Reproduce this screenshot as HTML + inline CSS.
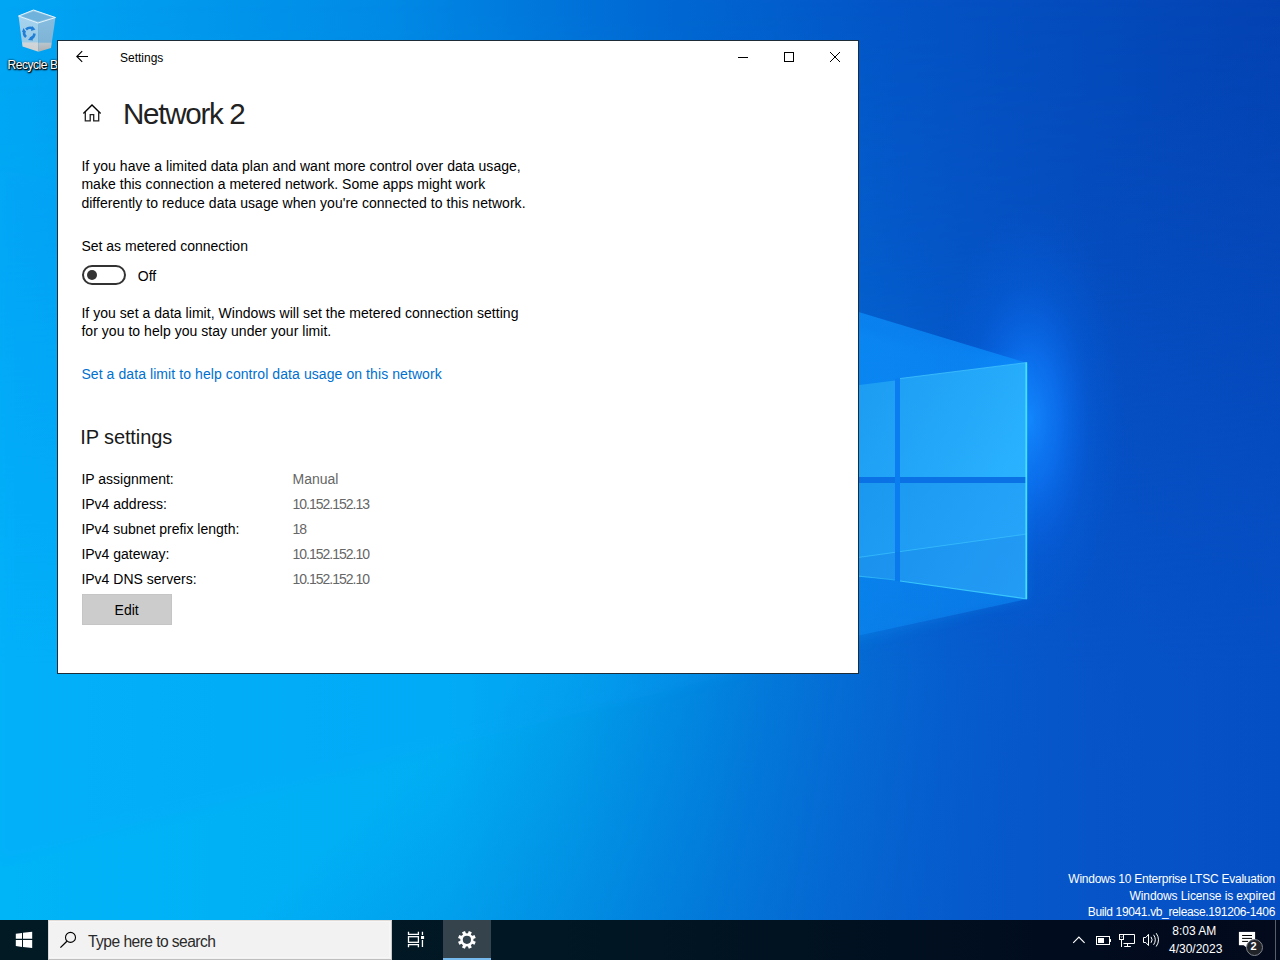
<!DOCTYPE html>
<html>
<head>
<meta charset="utf-8">
<style>
html,body{margin:0;padding:0;width:1280px;height:960px;overflow:hidden;}
body{position:relative;font-family:"Liberation Sans",sans-serif;background:#0070d8;}
.abs{position:absolute;white-space:nowrap;}
#bg{position:absolute;left:0;top:0;width:1280px;height:960px;
 background:linear-gradient(100deg,#00a6f2 0%,#00aef4 35%,#0090e6 60%,#0060cc 80%,#0048b8 100%);}
#win{position:absolute;left:57px;top:40px;width:800px;height:632px;background:#fff;border:1px solid #1d2c36;}
.t14{font-size:14px;line-height:14px;color:#000;}
.t12{font-size:12px;line-height:12px;}
#taskbar{position:absolute;left:0;top:920px;width:1280px;height:40px;background:linear-gradient(to right,#021a24 0%,#011824 40%,#010c1e 85%,#020a1c 100%);}
</style>
</head>
<body>
<svg id="bg" width="1280" height="960" viewBox="0 0 1280 960" style="position:absolute;left:0;top:0">
<defs>
 <linearGradient id="gTop" x1="0" y1="0" x2="1280" y2="0" gradientUnits="userSpaceOnUse">
  <stop offset="0" stop-color="#00a6f4"/><stop offset="0.3" stop-color="#008ae6"/><stop offset="0.5" stop-color="#006ad4"/><stop offset="0.7" stop-color="#0454c6"/><stop offset="1" stop-color="#0442b2"/>
 </linearGradient>
 <linearGradient id="gBot" x1="0" y1="0" x2="1280" y2="0" gradientUnits="userSpaceOnUse">
  <stop offset="0" stop-color="#00b4f8"/><stop offset="0.35" stop-color="#00aef4"/><stop offset="0.45" stop-color="#00a2ec"/><stop offset="0.55" stop-color="#008ee4"/><stop offset="0.65" stop-color="#0476da"/><stop offset="0.75" stop-color="#0660d0"/><stop offset="0.85" stop-color="#0652c8"/><stop offset="1" stop-color="#0446bf"/>
 </linearGradient>
 <linearGradient id="gMask" x1="0" y1="0" x2="0" y2="960" gradientUnits="userSpaceOnUse">
  <stop offset="0" stop-color="#000"/><stop offset="0.25" stop-color="#333"/><stop offset="0.7" stop-color="#fff"/><stop offset="1" stop-color="#fff"/>
 </linearGradient>
 <mask id="mBot"><rect width="1280" height="960" fill="url(#gMask)"/></mask>
 <radialGradient id="gGlow" cx="0" cy="0" r="1" gradientUnits="userSpaceOnUse" gradientTransform="translate(1030,420) scale(95,215)">
  <stop offset="0" stop-color="#1488ff" stop-opacity="0.95"/><stop offset="0.3" stop-color="#0e78fa" stop-opacity="0.7"/><stop offset="0.65" stop-color="#0866ea" stop-opacity="0.25"/><stop offset="1" stop-color="#0660e0" stop-opacity="0"/>
 </radialGradient>
 <linearGradient id="gPaneT" x1="858" y1="380" x2="1027" y2="470" gradientUnits="userSpaceOnUse">
  <stop offset="0" stop-color="#1c9cf2"/><stop offset="1" stop-color="#2ab2ff"/>
 </linearGradient>
 <linearGradient id="gPaneB" x1="858" y1="483" x2="1027" y2="590" gradientUnits="userSpaceOnUse">
  <stop offset="0" stop-color="#1a98f0"/><stop offset="1" stop-color="#28a6fc"/>
 </linearGradient>
 <linearGradient id="gBeam" x1="0" y1="300" x2="0" y2="670" gradientUnits="userSpaceOnUse">
  <stop offset="0" stop-color="#0c92ff" stop-opacity="0.68"/><stop offset="0.5" stop-color="#0c92ff" stop-opacity="0.6"/><stop offset="1" stop-color="#0c8cf8" stop-opacity="0.42"/>
 </linearGradient>
 <linearGradient id="gVig" x1="560" y1="640" x2="860" y2="980" gradientUnits="userSpaceOnUse">
  <stop offset="0" stop-color="#0656c8" stop-opacity="0"/><stop offset="1" stop-color="#0656c8" stop-opacity="0.55"/>
 </linearGradient>
 <filter id="fb" x="-20%" y="-20%" width="140%" height="140%"><feGaussianBlur stdDeviation="6"/></filter>
</defs>
<rect width="1280" height="960" fill="url(#gTop)"/>
<rect width="1280" height="960" fill="url(#gBot)" mask="url(#mBot)"/>
<rect width="1280" height="960" fill="url(#gVig)"/>
<rect width="1280" height="960" fill="url(#gGlow)"/>
<!-- beams -->
<polygon points="0,170 1027,363 1027,599 0,860" fill="#10a0ff" opacity="0.2" filter="url(#fb)"/>
<polygon points="700,264 1027,363 1027,599 700,670" fill="url(#gBeam)"/>

<!-- logo panes -->
<polygon points="820,390 895,380.5 895,477 820,477" fill="url(#gPaneT)"/>
<polygon points="900,378.5 1027,362.5 1027,477 900,477" fill="url(#gPaneT)"/>
<polygon points="820,483 895,483 895,579.5 820,574" fill="url(#gPaneB)"/>
<polygon points="900,483 1027,483 1027,599 900,581" fill="url(#gPaneB)"/>
<polygon points="820,477 1027,477 1027,483 820,483" fill="#0a72e4"/>
<polygon points="895,379 900,378.5 900,582 895,580" fill="#0a7ef0"/>
<polygon points="820,563 1027,534 1027,599 900,581 820,572" fill="#0a5cd0" opacity="0.13"/>
<path d="M858,557.5 L895,552.3 M900,551.6 L1027,534" stroke="#40c8ff" stroke-width="1" opacity="0.6" fill="none"/>
<line x1="1026.3" y1="362.5" x2="1026.3" y2="599" stroke="#48e4ff" stroke-width="1.8" opacity="0.95"/>
<line x1="900" y1="378.5" x2="1027" y2="362.5" stroke="#50d0ff" stroke-width="1" opacity="0.6"/>
<line x1="900" y1="581" x2="1027" y2="599" stroke="#40d4ff" stroke-width="1.2" opacity="0.8"/>
<line x1="858" y1="576" x2="895" y2="580" stroke="#40d4ff" stroke-width="1" opacity="0.5"/>
</svg>
<!-- recycle bin -->
<svg class="abs" style="left:0;top:0" width="70" height="60" viewBox="0 0 70 60">
 <defs>
  <linearGradient id="rbL" x1="0" y1="0" x2="0" y2="1"><stop offset="0" stop-color="#a6d4f0"/><stop offset="0.72" stop-color="#9ccbe6"/><stop offset="0.76" stop-color="#cfd6da"/><stop offset="1" stop-color="#d0d0d0"/></linearGradient>
  <linearGradient id="rbR" x1="0" y1="0" x2="0" y2="1"><stop offset="0" stop-color="#86bde0"/><stop offset="0.72" stop-color="#80b4d6"/><stop offset="0.76" stop-color="#b8c4cc"/><stop offset="1" stop-color="#b0b0b0"/></linearGradient>
 </defs>
 <polygon points="18.5,16 38,23 38.5,51.7 22.5,46.5" fill="url(#rbL)"/>
 <polygon points="38,23 55.5,17.5 51,48 38.5,51.7" fill="url(#rbR)"/>
 <polygon points="18.5,16 33.5,10 55.5,17.5 38,23" fill="#8ec6e6"/>
 <polygon points="21,16 33.5,11.5 53,17.5 38,21.5" fill="#6fb2dc"/>
 <path d="M18.5,16 L33.5,10 L55.5,17.5 L38,23 Z" fill="none" stroke="#e8f4fb" stroke-width="1"/>
 <g fill="none" stroke="#1f7fd6" stroke-width="2.6">
  <path d="M26,29.5 Q29,26.5 33,28.5"/>
  <path d="M34.5,33.5 Q34,38 30,38.5"/>
  <path d="M26,37 Q23,34 24.5,31"/>
 </g>
 <g fill="#1f7fd6">
  <polygon points="32,26 35.5,29.5 31,31"/>
  <polygon points="31.5,36 33,40.5 28,40"/>
  <polygon points="22,32 26,32 23.5,28"/>
 </g>
</svg>
<div class="abs t12" style="left:7.5px;top:59.3px;letter-spacing:-0.45px;color:#fff;text-shadow:0 0 2px #000,1px 1px 1px #000,0 1px 2px #000">Recycle Bin</div>
<!-- window -->
<div id="win"></div>
<svg class="abs" style="left:0;top:0" width="1280" height="920" viewBox="0 0 1280 920">
 <g fill="none" stroke="#000" stroke-width="1">
  <path d="M76.8,56.5 H88 M82.2,51.1 L76.8,56.5 L82.2,61.9" stroke-width="1.1"/>
  <path d="M83.4,113.6 L92,105.1 L100.6,113.6" stroke-width="1.4"/>
  <path d="M85.3,111.8 V120.8 H90.2 V114.7 H93.7 V120.8 H98.7 V111.8" stroke-width="1.3" stroke="#222"/>
  <path d="M738,57.5 H748"/>
  <rect x="784.5" y="52.5" width="9" height="9"/>
  <path d="M830,52 L840,62 M840,52 L830,62"/>
  <rect x="83" y="266" width="42" height="18" rx="9" ry="9" stroke="#333" stroke-width="2"/>
 </g>
 <circle cx="92" cy="275" r="5" fill="#333"/>
</svg>
<div class="abs t12" style="left:120px;top:52.3px;color:#000">Settings</div>
<div class="abs" style="left:123px;top:98.6px;font-size:29.6px;line-height:29.6px;letter-spacing:-1.3px;color:#222">Network 2</div>
<div class="abs t14" style="left:81.4px;top:156.50px;line-height:18.6px;letter-spacing:0.04px">If you have a limited data plan and want more control over data usage,<br>make this connection a metered network. Some apps might work<br>differently to reduce data usage when you're connected to this network.</div>
<div class="abs t14" style="left:81.4px;top:238.80px">Set as metered connection</div>
<div class="abs t14" style="left:137.8px;top:268.70px">Off</div>
<div class="abs t14" style="left:81.4px;top:303.80px;line-height:18.6px;letter-spacing:0.04px">If you set a data limit, Windows will set the metered connection setting<br>for you to help you stay under your limit.</div>
<div class="abs t14" style="left:81.4px;top:366.50px;color:#0070d0;letter-spacing:0.08px">Set a data limit to help control data usage on this network</div>
<div class="abs" style="left:80.2px;top:427.3px;font-size:20px;line-height:20px;letter-spacing:-0.1px;color:#1a1a1a">IP settings</div>

<div class="abs t14" style="left:81.4px;top:471.85px">IP assignment:</div>
<div class="abs t14" style="left:81.4px;top:496.85px">IPv4 address:</div>
<div class="abs t14" style="left:81.4px;top:521.85px">IPv4 subnet prefix length:</div>
<div class="abs t14" style="left:81.4px;top:546.85px">IPv4 gateway:</div>
<div class="abs t14" style="left:81.4px;top:571.85px">IPv4 DNS servers:</div>
<div class="abs t14" style="left:292.5px;top:471.85px;color:#666">Manual</div>
<div class="abs t14" style="left:292.5px;top:496.85px;color:#666;letter-spacing:-1px">10.152.152.13</div>
<div class="abs t14" style="left:292.5px;top:521.85px;color:#666;letter-spacing:-1px">18</div>
<div class="abs t14" style="left:292.5px;top:546.85px;color:#666;letter-spacing:-1px">10.152.152.10</div>
<div class="abs t14" style="left:292.5px;top:571.85px;color:#666;letter-spacing:-1px">10.152.152.10</div>
<div class="abs" style="left:82px;top:594px;width:90px;height:31px;background:#ccc;box-sizing:border-box;border:1px solid #c5c5c5"></div>
<div class="abs t14" style="left:114.6px;top:602.80px">Edit</div>

<!-- taskbar -->
<div id="taskbar"></div>
<div class="abs" style="left:48px;top:920px;width:344px;height:40px;background:#f2f2f2;box-sizing:border-box;border-left:1px solid #d8d8d8;border-top:1px solid #e2dcd8;border-right:1px solid #c8c8c8;border-bottom:1px solid #bebebe"></div>
<div class="abs" style="left:49px;top:921px;width:341px;height:37px;box-sizing:border-box;border-left:1px solid #f6f6f6;border-top:1px solid #f6f6f6;border-right:1px solid #f6f6f6;border-bottom:1px solid #f6f6f6"></div>
<div class="abs" style="left:88px;top:934px;font-size:15.6px;line-height:15.6px;color:#2a2a2a;letter-spacing:-0.55px">Type here to search</div>
<div class="abs" style="left:443px;top:920px;width:48px;height:40px;background:#34434c"></div>
<div class="abs" style="left:443px;top:958px;width:48px;height:2px;background:#76b9ed"></div>
<svg class="abs" style="left:0;top:920px" width="1280" height="40" viewBox="0 920 1280 40">
 <g fill="#fff">
  <polygon points="15.8,933.8 22,932.9 22,938.8 15.8,938.8"/>
  <polygon points="23,932.8 32.2,931.8 32.2,938.8 23,938.8"/>
  <polygon points="15.8,940 22,940 22,946.9 15.8,946.1"/>
  <polygon points="23,940 32.2,940 32.2,948 23,947"/>
 </g>
 <g fill="none" stroke="#000">
  <circle cx="70.5" cy="937.4" r="5" stroke-width="1.1"/>
  <path d="M66.9,941.2 L60.4,947.6" stroke-width="1.3"/>
 </g>
 <g fill="none" stroke="#fff" stroke-width="1.3">
  <path d="M408.5,931.8 V934.3 H418.4 V931.8"/>
  <rect x="408.5" y="936.7" width="9.9" height="5.6"/>
  <path d="M408.5,947.2 V944.7 H418.4 V947.2"/>
  <path d="M422.45,931.8 V934.9 M422.45,940.1 V947"/>
 </g>
 <rect x="421" y="936" width="3.1" height="3" fill="#fff"/>
 <g fill="#fff" transform="translate(466.9,939.85)">
  <circle r="6.6"/>
  <g id="teeth">
   <rect x="-1.6" y="-8.9" width="3.2" height="4" transform="rotate(22.5)"/>
   <rect x="-1.6" y="-8.9" width="3.2" height="4" transform="rotate(67.5)"/>
   <rect x="-1.6" y="-8.9" width="3.2" height="4" transform="rotate(112.5)"/>
   <rect x="-1.6" y="-8.9" width="3.2" height="4" transform="rotate(157.5)"/>
   <rect x="-1.6" y="-8.9" width="3.2" height="4" transform="rotate(202.5)"/>
   <rect x="-1.6" y="-8.9" width="3.2" height="4" transform="rotate(247.5)"/>
   <rect x="-1.6" y="-8.9" width="3.2" height="4" transform="rotate(292.5)"/>
   <rect x="-1.6" y="-8.9" width="3.2" height="4" transform="rotate(337.5)"/>
  </g>
  <circle r="4.1" fill="#34444f"/>
 </g>
 <g fill="none" stroke="#fff" stroke-width="1">
  <path d="M1073.2,942.8 L1078.9,937 L1084.6,942.8" stroke="#fff" stroke-width="1.15"/>
  <rect x="1096.5" y="936.5" width="13" height="8"/>
  <rect x="1119.5" y="934.5" width="4" height="5"/>
  <path d="M1123.5,934.5 H1134.5 V943.5 H1123.5 M1121.5,939.5 V947 M1127.5,943.5 V946.5 M1124.2,946.5 H1130.8"/>
  <path d="M1143.5,937.5 H1145.8 L1148.5,934.3 V945.5 L1145.8,942.5 H1143.5 Z"/>
  <path d="M1151,936.8 Q1153.2,939.8 1151,942.8 M1153.6,934.8 Q1157,939.8 1153.6,944.8 M1156.2,933.2 Q1160.8,939.8 1156.2,946.5"/>
 </g>
 <rect x="1098" y="938" width="6" height="5" fill="#fff"/>
 <rect x="1110" y="939" width="1" height="3" fill="#fff"/>
 <path d="M1120.8,936.3 L1121.6,937.4 L1122.4,936.3" fill="none" stroke="#fff" stroke-width="0.7"/>
 <rect x="1238.9" y="931.9" width="16.2" height="13.3" fill="#fff"/>
 <polygon points="1243.5,945 1247,945 1247,948" fill="#fff"/>
 <g stroke="#000" stroke-width="1">
  <path d="M1242.1,935.5 H1252 M1242.1,938.4 H1252 M1242.1,941.4 H1248"/>
 </g>
 <circle cx="1254.5" cy="947.5" r="8" fill="#202328" stroke="#80848c" stroke-width="1"/>
 <rect x="1275" y="920" width="1" height="40" fill="#5a5e68"/>
</svg>
<div class="abs t12" style="left:1172.3px;top:925.3px;color:#fff">8:03 AM</div>
<div class="abs t12" style="left:1169px;top:943.1px;color:#fff">4/30/2023</div>
<div class="abs" style="left:1250.5px;top:941px;font-size:11px;line-height:11px;color:#fff;font-weight:bold">2</div>

<!-- watermark -->
<div class="abs t12" style="right:5px;top:871.6px;color:#fff;text-align:right;line-height:16.35px;letter-spacing:-0.25px"><span style="position:relative;top:-0.6px">Windows 10 Enterprise LTSC Evaluation</span><br><span style="letter-spacing:-0.1px">Windows License is expired</span><br><span style="letter-spacing:-0.36px">Build 19041.vb_release.191206-1406</span></div>
</body>
</html>
